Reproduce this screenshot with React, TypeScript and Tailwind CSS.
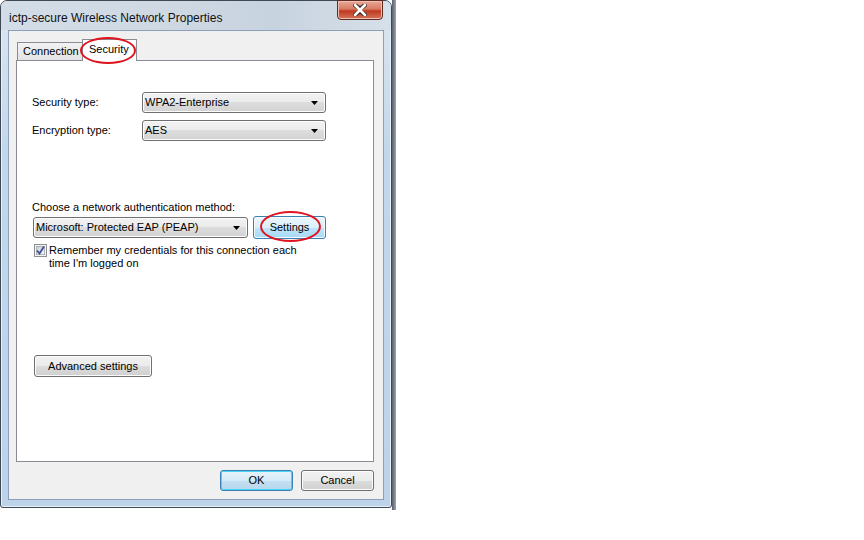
import React from "react";

const font = { fontFamily: '"Liberation Sans", Arial, sans-serif' };

function Arrow() {
  return (
    <svg width="7" height="4" viewBox="0 0 7 4" className="shrink-0">
      <path d="M0 0H7L3.5 4Z" fill="#000" />
    </svg>
  );
}

function Combo({ text, w }: { text: string; w: string }) {
  return (
    <div
      className={`${w} h-[21px] border border-[#707070] rounded-[3px] bg-[linear-gradient(#f2f2f2_0%,#ebebeb_50%,#dddddd_50%,#d3d3d3_100%)] shadow-[inset_0_0_0_1px_#fcfcfc] flex items-center justify-between pl-[2px] pr-[7px] text-[11px] text-black`}
    >
      <span>{text}</span>
      <Arrow />
    </div>
  );
}

function Button({
  children,
  w,
  h = "h-[22px]",
  variant = "normal",
}: {
  children: React.ReactNode;
  w: string;
  h?: string;
  variant?: "normal" | "hover" | "default";
}) {
  const cls =
    variant === "hover"
      ? "border-[#3c7fb1] bg-[linear-gradient(#eaf6fd_0%,#d9f0fc_50%,#bee6fd_50%,#a7d9f5_100%)] shadow-[inset_0_0_0_1px_#f4fbff]"
      : variant === "default"
      ? "border-[#3c7fb1] bg-[linear-gradient(#e5f3fb_0%,#d6ebf8_50%,#c4e0f2_50%,#b6d7ee_100%)] shadow-[inset_0_0_0_1px_#48d4f6]"
      : "border-[#707070] bg-[linear-gradient(#f2f2f2_0%,#ebebeb_50%,#dddddd_50%,#cfcfcf_100%)] shadow-[inset_0_0_0_1px_#fcfcfc]";
  return (
    <div
      className={`${w} ${h} border rounded-[3px] ${cls} flex items-center justify-center text-[11px] text-black`}
    >
      {children}
    </div>
  );
}

function Checkbox() {
  return (
    <div className="w-[13px] h-[13px] border border-[#8e8f8f] bg-[#f4f4f4] flex items-center justify-center shrink-0">
      <div className="w-[9px] h-[9px] border border-[#aeb3b9] bg-[linear-gradient(135deg,#cbcfd5,#f6f6f6)] flex items-center justify-center">
        <svg width="9" height="9" viewBox="0 0 9 9" className="overflow-visible">
          <path d="M1 4.5L3.5 7.5L8 0.5" fill="none" stroke="#3c4f9a" strokeWidth="1.8" />
        </svg>
      </div>
    </div>
  );
}

export default function App() {
  return (
    <div className="relative w-[864px] h-[540px] bg-white" style={font}>
      <div className="flex">
        {/* Window */}
        <div className="w-[392px] h-[508px] rounded-t-[7px] rounded-b-[3px] border border-[#3f4855] bg-[linear-gradient(180deg,#c9d6e4_0%,#d8e3ee_6%,#c2d7ec_30%,#bcd3ea_100%)] flex flex-col shadow-[inset_0_0_0_1px_#e8f0f8]">
          {/* Title bar */}
          <div className="h-[29px] flex items-start justify-between shrink-0 bg-[linear-gradient(90deg,#d3dde8_0%,#cfd9e4_40%,#c7d3df_70%,#d6e0ea_100%)] rounded-t-[6px]">
            <div className="pl-[8px] pt-[10px] text-[12px] leading-[14px] text-[#111]">
              ictp-secure Wireless Network Properties
            </div>
            <div className="mr-[8px] w-[46px] h-[20px] -mt-[1px] rounded-b-[4px] border border-[#5e2a24] bg-[linear-gradient(#e9a898_0%,#d67a62_45%,#c0391f_55%,#d4745a_100%)] shadow-[inset_0_0_0_1px_#f0c0b0] flex items-center justify-center">
              <svg width="14" height="12" viewBox="0 0 14 12">
                <path
                  d="M2 1L7 5L12 1M2 11L7 7L12 11"
                  fill="none"
                  stroke="#3b2a28"
                  strokeWidth="4.2"
                  strokeLinecap="round"
                />
                <path d="M2 1L12 11M12 1L2 11" fill="none" stroke="#fff" strokeWidth="2.6" strokeLinecap="round" />
              </svg>
            </div>
          </div>
          {/* Client */}
          <div className="ml-[7px] mr-[7px] h-[470px] border border-[#8ba0b8] bg-[#f0f0f0] pl-[7px] pr-[9px] pt-[8px] flex flex-col">
            {/* Tabs */}
            <div className="h-[21px] flex items-end pl-[1px] relative z-10">
              <div className="w-[66px] h-[18px] border border-b-0 border-[#898c95] bg-[linear-gradient(#f2f2f2,#e3e3e3)] text-[11px] leading-[17px] pl-[5px] text-black">
                Connection
              </div>
              <div className="w-[55px] h-[22px] -ml-[1px] -mb-[1px] border border-b-0 border-[#898c95] bg-white text-[11px] leading-[18px] pl-[6px] text-black">
                Security
              </div>
            </div>
            {/* Page */}
            <div className="h-[402px] border border-[#898c95] bg-white relative">
              <div className="pt-[31px] pl-[16px] flex flex-col">
                <div className="flex items-center h-[21px] -ml-[1px]">
                  <div className="w-[110px] text-[11px] text-black">Security type:</div>
                  <Combo text="WPA2-Enterprise" w="w-[184px]" />
                </div>
                <div className="flex items-center h-[21px] mt-[7px] -ml-[1px]">
                  <div className="w-[110px] text-[11px] text-black">Encryption type:</div>
                  <Combo text="AES" w="w-[184px]" />
                </div>
                <div className="mt-[59px] -ml-[1px] text-[11px] leading-[15px] text-black">
                  Choose a network authentication method:
                </div>
                <div className="flex items-center mt-[1px] gap-[5px]">
                  <Combo text="Microsoft: Protected EAP (PEAP)" w="w-[215px]" />
                  <Button w="w-[73px]" h="h-[23px]" variant="hover">
                    Settings
                  </Button>
                </div>
                <div className="flex items-start mt-[5px] pl-[1px] gap-[2px]">
                  <Checkbox />
                  <div className="text-[11px] leading-[13px] text-black whitespace-nowrap">
                    Remember my credentials for this connection each
                    <br />
                    time I'm logged on
                  </div>
                </div>
                <div className="mt-[85px] pl-[1px]">
                  <Button w="w-[118px]">Advanced settings</Button>
                </div>
              </div>
            </div>
            {/* Bottom buttons */}
            <div className="flex justify-end gap-[8px] mt-[8px]">
              <Button w="w-[73px]" h="h-[21px]" variant="default">
                OK
              </Button>
              <Button w="w-[73px]" h="h-[21px]">
                Cancel
              </Button>
            </div>
          </div>
        </div>
        {/* desktop strip */}
        <div className="w-[4px] h-[510px] bg-[linear-gradient(90deg,#55606c,#9aa5b0)]" />
      </div>

      {/* Red annotation ellipses */}
      <div className="absolute z-20 left-[80px] top-[37px] w-[56px] h-[27px] rounded-[50%] border-2 border-[#e0141e]" />
      <div className="absolute z-20 left-[260px] top-[211px] w-[61px] h-[31px] rounded-[50%] border-2 border-[#e0141e]" />
    </div>
  );
}
